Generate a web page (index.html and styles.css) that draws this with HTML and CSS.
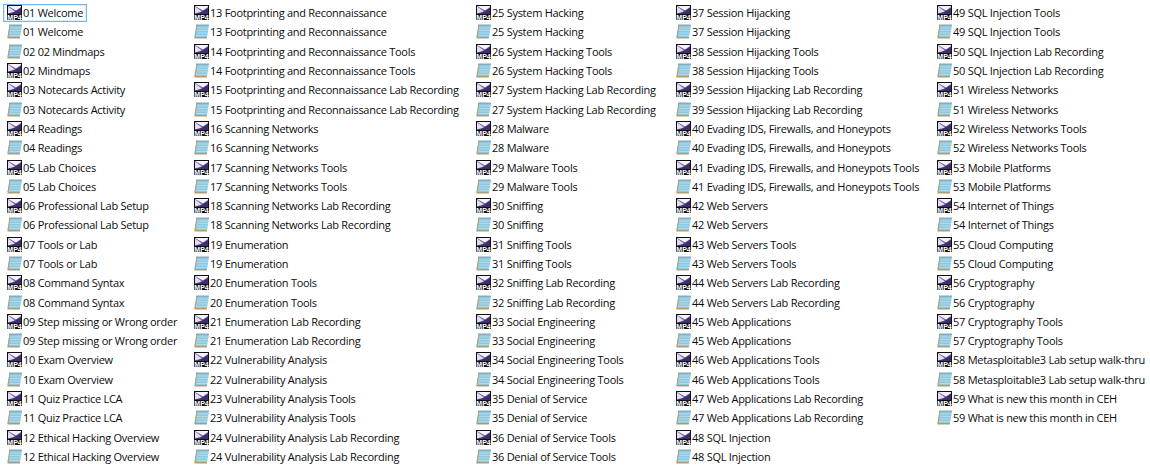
FILE: index.html
```html
<!DOCTYPE html>
<html lang="en">
<head>
<meta charset="utf-8">
<title>Files</title>
<link rel="stylesheet" href="styles.css">
</head>
<body>
<svg class="defs" width="16" height="16" aria-hidden="true">
  <symbol id="mp4" viewBox="0 0 15 15">
    <rect x="0" y="0" width="15" height="15" fill="#100e16"/>
    <path d="M1 1H14V8.500H1Z" fill="#6f5ca4"/>
    <path d="M1 1H14V2L9 5.500Z" fill="#f6f3fb"/>
    <path d="M1 1.500L8 6.500 1 8.500Z" fill="#e4ddf2"/>
    <path d="M9 6L14 3V8.500H4Z" fill="#3d2e72"/>
    <text x="7.500" y="14.600" text-anchor="middle" class="tag">MP4</text>
  </symbol>
  <symbol id="note" viewBox="0 0 15 15">
    <path d="M2.500 1H15L13 13H0.500Z" fill="#8fc8de"/>
    <path d="M2.500 1L0.500 13V14.500H12.800L13 13H1.500L3.300 1Z" fill="#b09c72"/>
    <path d="M3.300 4H14.500M3 6.500H14.100M2.600 9H13.700M2.300 11.500H13.300" stroke="#b4dcea" stroke-width="0.900" fill="none"/>
    <path d="M2.500 1H15" stroke="#6c8794" stroke-width="1.300" stroke-dasharray="1 1"/>
  </symbol>
</svg>
<main class="view">
  <section class="col c1">
    <div class="item selected"><svg class="ico"><use href="#mp4"/></svg><span>01 Welcome</span></div>
    <div class="item"><svg class="ico"><use href="#note"/></svg><span>01 Welcome</span></div>
    <div class="item"><svg class="ico"><use href="#note"/></svg><span>02 02 Mindmaps</span></div>
    <div class="item"><svg class="ico"><use href="#mp4"/></svg><span>02 Mindmaps</span></div>
    <div class="item"><svg class="ico"><use href="#mp4"/></svg><span>03 Notecards Activity</span></div>
    <div class="item"><svg class="ico"><use href="#note"/></svg><span>03 Notecards Activity</span></div>
    <div class="item"><svg class="ico"><use href="#mp4"/></svg><span>04 Readings</span></div>
    <div class="item"><svg class="ico"><use href="#note"/></svg><span>04 Readings</span></div>
    <div class="item"><svg class="ico"><use href="#mp4"/></svg><span>05 Lab Choices</span></div>
    <div class="item"><svg class="ico"><use href="#note"/></svg><span>05 Lab Choices</span></div>
    <div class="item"><svg class="ico"><use href="#mp4"/></svg><span>06 Professional Lab Setup</span></div>
    <div class="item"><svg class="ico"><use href="#note"/></svg><span>06 Professional Lab Setup</span></div>
    <div class="item"><svg class="ico"><use href="#mp4"/></svg><span>07 Tools or Lab</span></div>
    <div class="item"><svg class="ico"><use href="#note"/></svg><span>07 Tools or Lab</span></div>
    <div class="item"><svg class="ico"><use href="#mp4"/></svg><span>08 Command Syntax</span></div>
    <div class="item"><svg class="ico"><use href="#note"/></svg><span>08 Command Syntax</span></div>
    <div class="item"><svg class="ico"><use href="#mp4"/></svg><span>09 Step missing or Wrong order</span></div>
    <div class="item"><svg class="ico"><use href="#note"/></svg><span>09 Step missing or Wrong order</span></div>
    <div class="item"><svg class="ico"><use href="#mp4"/></svg><span>10 Exam Overview</span></div>
    <div class="item"><svg class="ico"><use href="#note"/></svg><span>10 Exam Overview</span></div>
    <div class="item"><svg class="ico"><use href="#mp4"/></svg><span>11 Quiz Practice LCA</span></div>
    <div class="item"><svg class="ico"><use href="#note"/></svg><span>11 Quiz Practice LCA</span></div>
    <div class="item"><svg class="ico"><use href="#mp4"/></svg><span>12 Ethical Hacking Overview</span></div>
    <div class="item"><svg class="ico"><use href="#note"/></svg><span>12 Ethical Hacking Overview</span></div>
  </section>
  <section class="col c2">
    <div class="item"><svg class="ico"><use href="#mp4"/></svg><span>13 Footprinting and Reconnaissance</span></div>
    <div class="item"><svg class="ico"><use href="#note"/></svg><span>13 Footprinting and Reconnaissance</span></div>
    <div class="item"><svg class="ico"><use href="#mp4"/></svg><span>14 Footprinting and Reconnaissance Tools</span></div>
    <div class="item"><svg class="ico"><use href="#note"/></svg><span>14 Footprinting and Reconnaissance Tools</span></div>
    <div class="item"><svg class="ico"><use href="#mp4"/></svg><span>15 Footprinting and Reconnaissance Lab Recording</span></div>
    <div class="item"><svg class="ico"><use href="#note"/></svg><span>15 Footprinting and Reconnaissance Lab Recording</span></div>
    <div class="item"><svg class="ico"><use href="#mp4"/></svg><span>16 Scanning Networks</span></div>
    <div class="item"><svg class="ico"><use href="#note"/></svg><span>16 Scanning Networks</span></div>
    <div class="item"><svg class="ico"><use href="#mp4"/></svg><span>17 Scanning Networks Tools</span></div>
    <div class="item"><svg class="ico"><use href="#note"/></svg><span>17 Scanning Networks Tools</span></div>
    <div class="item"><svg class="ico"><use href="#mp4"/></svg><span>18 Scanning Networks Lab Recording</span></div>
    <div class="item"><svg class="ico"><use href="#note"/></svg><span>18 Scanning Networks Lab Recording</span></div>
    <div class="item"><svg class="ico"><use href="#mp4"/></svg><span>19 Enumeration</span></div>
    <div class="item"><svg class="ico"><use href="#note"/></svg><span>19 Enumeration</span></div>
    <div class="item"><svg class="ico"><use href="#mp4"/></svg><span>20 Enumeration Tools</span></div>
    <div class="item"><svg class="ico"><use href="#note"/></svg><span>20 Enumeration Tools</span></div>
    <div class="item"><svg class="ico"><use href="#mp4"/></svg><span>21 Enumeration Lab Recording</span></div>
    <div class="item"><svg class="ico"><use href="#note"/></svg><span>21 Enumeration Lab Recording</span></div>
    <div class="item"><svg class="ico"><use href="#mp4"/></svg><span>22 Vulnerability Analysis</span></div>
    <div class="item"><svg class="ico"><use href="#note"/></svg><span>22 Vulnerability Analysis</span></div>
    <div class="item"><svg class="ico"><use href="#mp4"/></svg><span>23 Vulnerability Analysis Tools</span></div>
    <div class="item"><svg class="ico"><use href="#note"/></svg><span>23 Vulnerability Analysis Tools</span></div>
    <div class="item"><svg class="ico"><use href="#mp4"/></svg><span>24 Vulnerability Analysis Lab Recording</span></div>
    <div class="item"><svg class="ico"><use href="#note"/></svg><span>24 Vulnerability Analysis Lab Recording</span></div>
  </section>
  <section class="col c3">
    <div class="item"><svg class="ico"><use href="#mp4"/></svg><span>25 System Hacking</span></div>
    <div class="item"><svg class="ico"><use href="#note"/></svg><span>25 System Hacking</span></div>
    <div class="item"><svg class="ico"><use href="#mp4"/></svg><span>26 System Hacking Tools</span></div>
    <div class="item"><svg class="ico"><use href="#note"/></svg><span>26 System Hacking Tools</span></div>
    <div class="item"><svg class="ico"><use href="#mp4"/></svg><span>27 System Hacking Lab Recording</span></div>
    <div class="item"><svg class="ico"><use href="#note"/></svg><span>27 System Hacking Lab Recording</span></div>
    <div class="item"><svg class="ico"><use href="#mp4"/></svg><span>28 Malware</span></div>
    <div class="item"><svg class="ico"><use href="#note"/></svg><span>28 Malware</span></div>
    <div class="item"><svg class="ico"><use href="#mp4"/></svg><span>29 Malware Tools</span></div>
    <div class="item"><svg class="ico"><use href="#note"/></svg><span>29 Malware Tools</span></div>
    <div class="item"><svg class="ico"><use href="#mp4"/></svg><span>30 Sniffing</span></div>
    <div class="item"><svg class="ico"><use href="#note"/></svg><span>30 Sniffing</span></div>
    <div class="item"><svg class="ico"><use href="#mp4"/></svg><span>31 Sniffing Tools</span></div>
    <div class="item"><svg class="ico"><use href="#note"/></svg><span>31 Sniffing Tools</span></div>
    <div class="item"><svg class="ico"><use href="#mp4"/></svg><span>32 Sniffing Lab Recording</span></div>
    <div class="item"><svg class="ico"><use href="#note"/></svg><span>32 Sniffing Lab Recording</span></div>
    <div class="item"><svg class="ico"><use href="#mp4"/></svg><span>33 Social Engineering</span></div>
    <div class="item"><svg class="ico"><use href="#note"/></svg><span>33 Social Engineering</span></div>
    <div class="item"><svg class="ico"><use href="#mp4"/></svg><span>34 Social Engineering Tools</span></div>
    <div class="item"><svg class="ico"><use href="#note"/></svg><span>34 Social Engineering Tools</span></div>
    <div class="item"><svg class="ico"><use href="#mp4"/></svg><span>35 Denial of Service</span></div>
    <div class="item"><svg class="ico"><use href="#note"/></svg><span>35 Denial of Service</span></div>
    <div class="item"><svg class="ico"><use href="#mp4"/></svg><span>36 Denial of Service Tools</span></div>
    <div class="item"><svg class="ico"><use href="#note"/></svg><span>36 Denial of Service Tools</span></div>
  </section>
  <section class="col c4">
    <div class="item"><svg class="ico"><use href="#mp4"/></svg><span>37 Session Hijacking</span></div>
    <div class="item"><svg class="ico"><use href="#note"/></svg><span>37 Session Hijacking</span></div>
    <div class="item"><svg class="ico"><use href="#mp4"/></svg><span>38 Session Hijacking Tools</span></div>
    <div class="item"><svg class="ico"><use href="#note"/></svg><span>38 Session Hijacking Tools</span></div>
    <div class="item"><svg class="ico"><use href="#mp4"/></svg><span>39 Session Hijacking Lab Recording</span></div>
    <div class="item"><svg class="ico"><use href="#note"/></svg><span>39 Session Hijacking Lab Recording</span></div>
    <div class="item"><svg class="ico"><use href="#mp4"/></svg><span>40 Evading IDS, Firewalls, and Honeypots</span></div>
    <div class="item"><svg class="ico"><use href="#note"/></svg><span>40 Evading IDS, Firewalls, and Honeypots</span></div>
    <div class="item"><svg class="ico"><use href="#mp4"/></svg><span>41 Evading IDS, Firewalls, and Honeypots Tools</span></div>
    <div class="item"><svg class="ico"><use href="#note"/></svg><span>41 Evading IDS, Firewalls, and Honeypots Tools</span></div>
    <div class="item"><svg class="ico"><use href="#mp4"/></svg><span>42 Web Servers</span></div>
    <div class="item"><svg class="ico"><use href="#note"/></svg><span>42 Web Servers</span></div>
    <div class="item"><svg class="ico"><use href="#mp4"/></svg><span>43 Web Servers Tools</span></div>
    <div class="item"><svg class="ico"><use href="#note"/></svg><span>43 Web Servers Tools</span></div>
    <div class="item"><svg class="ico"><use href="#mp4"/></svg><span>44 Web Servers Lab Recording</span></div>
    <div class="item"><svg class="ico"><use href="#note"/></svg><span>44 Web Servers Lab Recording</span></div>
    <div class="item"><svg class="ico"><use href="#mp4"/></svg><span>45 Web Applications</span></div>
    <div class="item"><svg class="ico"><use href="#note"/></svg><span>45 Web Applications</span></div>
    <div class="item"><svg class="ico"><use href="#mp4"/></svg><span>46 Web Applications Tools</span></div>
    <div class="item"><svg class="ico"><use href="#note"/></svg><span>46 Web Applications Tools</span></div>
    <div class="item"><svg class="ico"><use href="#mp4"/></svg><span>47 Web Applications Lab Recording</span></div>
    <div class="item"><svg class="ico"><use href="#note"/></svg><span>47 Web Applications Lab Recording</span></div>
    <div class="item"><svg class="ico"><use href="#mp4"/></svg><span>48 SQL Injection</span></div>
    <div class="item"><svg class="ico"><use href="#note"/></svg><span>48 SQL Injection</span></div>
  </section>
  <section class="col c5">
    <div class="item"><svg class="ico"><use href="#mp4"/></svg><span>49 SQL Injection Tools</span></div>
    <div class="item"><svg class="ico"><use href="#note"/></svg><span>49 SQL Injection Tools</span></div>
    <div class="item"><svg class="ico"><use href="#mp4"/></svg><span>50 SQL Injection Lab Recording</span></div>
    <div class="item"><svg class="ico"><use href="#note"/></svg><span>50 SQL Injection Lab Recording</span></div>
    <div class="item"><svg class="ico"><use href="#mp4"/></svg><span>51 Wireless Networks</span></div>
    <div class="item"><svg class="ico"><use href="#note"/></svg><span>51 Wireless Networks</span></div>
    <div class="item"><svg class="ico"><use href="#mp4"/></svg><span>52 Wireless Networks Tools</span></div>
    <div class="item"><svg class="ico"><use href="#note"/></svg><span>52 Wireless Networks Tools</span></div>
    <div class="item"><svg class="ico"><use href="#mp4"/></svg><span>53 Mobile Platforms</span></div>
    <div class="item"><svg class="ico"><use href="#note"/></svg><span>53 Mobile Platforms</span></div>
    <div class="item"><svg class="ico"><use href="#mp4"/></svg><span>54 Internet of Things</span></div>
    <div class="item"><svg class="ico"><use href="#note"/></svg><span>54 Internet of Things</span></div>
    <div class="item"><svg class="ico"><use href="#mp4"/></svg><span>55 Cloud Computing</span></div>
    <div class="item"><svg class="ico"><use href="#note"/></svg><span>55 Cloud Computing</span></div>
    <div class="item"><svg class="ico"><use href="#mp4"/></svg><span>56 Cryptography</span></div>
    <div class="item"><svg class="ico"><use href="#note"/></svg><span>56 Cryptography</span></div>
    <div class="item"><svg class="ico"><use href="#mp4"/></svg><span>57 Cryptography Tools</span></div>
    <div class="item"><svg class="ico"><use href="#note"/></svg><span>57 Cryptography Tools</span></div>
    <div class="item"><svg class="ico"><use href="#mp4"/></svg><span>58 Metasploitable3 Lab setup walk-thru</span></div>
    <div class="item"><svg class="ico"><use href="#note"/></svg><span>58 Metasploitable3 Lab setup walk-thru</span></div>
    <div class="item"><svg class="ico"><use href="#mp4"/></svg><span>59 What is new this month in CEH</span></div>
    <div class="item"><svg class="ico"><use href="#note"/></svg><span>59 What is new this month in CEH</span></div>
  </section>
</main>
</body>
</html>
```
FILE: styles.css
```css
html, body {
  margin: 0;
  padding: 0;
  background: #fff;
  overflow: hidden;
}
.defs {
  position: absolute;
  left: 0;
  top: 0;
  width: 16px;
  height: 16px;
  visibility: hidden;
}
.view {
  display: flex;
  align-items: flex-start;
  padding: 3px 0 0 6px;
  font-family: "Open Sans", "Noto Sans", sans-serif;
  font-size: 11px;
  letter-spacing: -0.27px;
  color: #0c0c0c;
}
.col {
  display: grid;
  flex: none;
  grid-auto-rows: 19.3px;
}
.c1 { width: 187px; }
.c2 { width: 282px; }
.c3 { width: 200px; }
.c4 { width: 261px; }
.item {
  display: flex;
  align-items: center;
  gap: 1px;
  white-space: nowrap;
}
.ico {
  width: 15px;
  height: 15px;
  margin-left: 1px;
  flex: none;
}
.tag {
  font: bold 7px "Liberation Sans", sans-serif;
  letter-spacing: 0;
  fill: #fff;
}
.selected {
  width: 84px;
  height: 18px;
  margin-top: 1px;
  padding-bottom: 1px;
  box-sizing: border-box;
  margin-left: -3px;
  padding-left: 3px;
  box-shadow: inset 0 0 0 1px #7db4e6, inset 0 0 0 2px #dcecfa;
}
```
